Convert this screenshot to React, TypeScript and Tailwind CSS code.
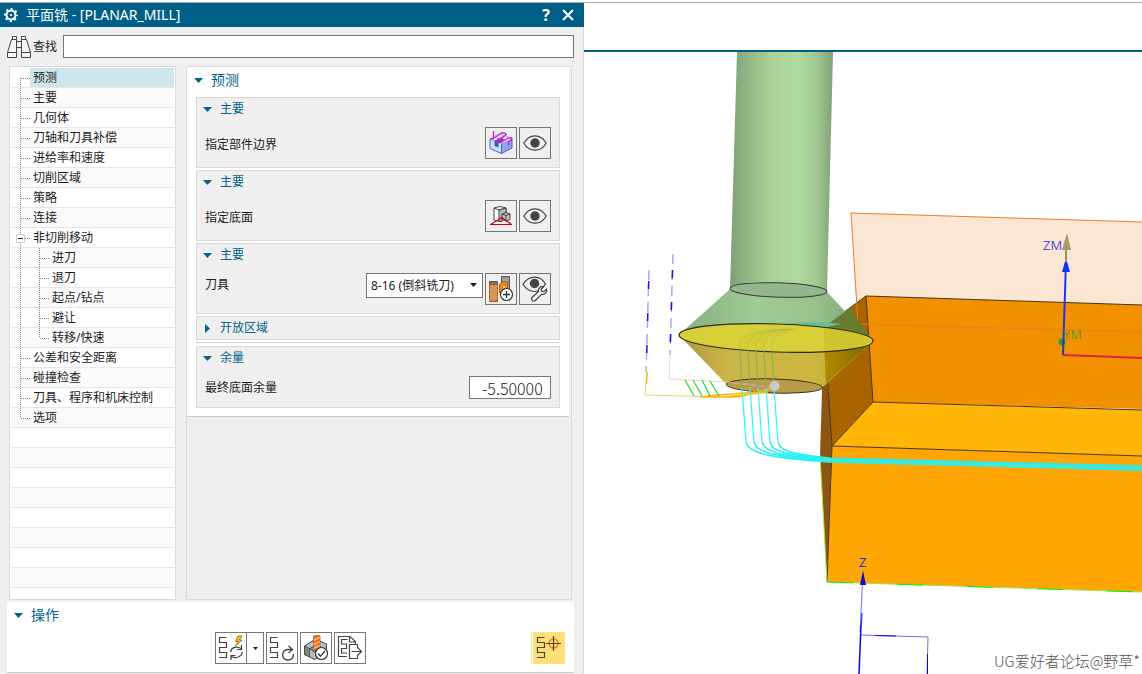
import React, { useState } from 'react';
import clsx from 'clsx';

interface TreeItem {
  label: string;
  level?: number;
  open?: boolean;
  last?: boolean;
}

const TREE: TreeItem[] = [
  { label: '预测' },
  { label: '主要' },
  { label: '几何体' },
  { label: '刀轴和刀具补偿' },
  { label: '进给率和速度' },
  { label: '切削区域' },
  { label: '策略' },
  { label: '连接' },
  { label: '非切削移动', open: true },
  { label: '进刀', level: 1 },
  { label: '退刀', level: 1 },
  { label: '起点/钻点', level: 1 },
  { label: '避让', level: 1 },
  { label: '转移/快速', level: 1, last: true },
  { label: '公差和安全距离' },
  { label: '碰撞检查' },
  { label: '刀具、程序和机床控制' },
  { label: '选项', last: true },
];

const EMPTY_ROWS = 8;

/* ---------- icons ---------- */

const GearIcon = () => (
  <svg viewBox="0 0 14 14" className="size-3.5" fill="none" stroke="#fff">
    <circle cx="7" cy="7" r="4.4" strokeWidth="2" />
    <circle cx="7" cy="7" r="6" strokeWidth="1.8" strokeDasharray="2.3 2.41" strokeDashoffset="1.15" />
    <circle cx="7" cy="7" r="1.1" fill="#fff" stroke="none" />
  </svg>
);

const BinocularsIcon = () => (
  <svg viewBox="0 0 24 22" className="h-[22px] w-6 shrink-0" fill="#f6f6f6" stroke="#444" strokeWidth="1">
    <path d="M5.5 .5h4v3h-4zM14.5 .5h4v3h-4z" />
    <path d="M4.5 3.5h5v13h-9zM14.5 3.5h5l4 13h-9z" />
    <path d="M9.5 5.5h5v6h-5z" />
    <path d="M.5 16.5h9v5h-9zM14.5 16.5h9v5h-9z" />
  </svg>
);

const CaretDown = ({ className = 'h-[5px] w-[9px]' }: { className?: string }) => (
  <svg viewBox="0 0 9 5" className={className} fill="currentColor">
    <path d="M0 0h9L4.5 5z" />
  </svg>
);

const CaretRight = () => (
  <svg viewBox="0 0 5 9" className="mx-0.5 h-[9px] w-[5px]" fill="currentColor">
    <path d="M0 0v9L5 4.5z" />
  </svg>
);

const EyeIcon = () => (
  <svg viewBox="0 0 24 16" className="h-4 w-6" fill="none" stroke="#444" strokeWidth="1.2">
    <path d="M.8 8C3.5 3.2 7.5.8 12 .8S20.5 3.2 23.2 8C20.5 12.800 16.5 15.2 12 15.2S3.5 12.8.8 8z" />
    <circle cx="12" cy="8" r="4.7" fill="#444" stroke="none" />
  </svg>
);

const EyeWrenchIcon = () => (
  <svg viewBox="0 0 26 26" className="size-[26px]" fill="none" stroke="#444" strokeWidth="1.2">
    <path d="M1 8.5C4 3.6 8 1.2 12.5 1.2S21 3.6 23.5 8C20.5 12.8 17 15.5 12.5 15.5S4 13 1 8.5z" />
    <circle cx="12.5" cy="7.500" r="4.700" fill="#444" stroke="none" />
    <path
      fill="#f3f3f3"
      d="M10 21.500l6.500-6c-.6-2.600 1.500-5.500 5-5l-2.500 2.700.6 2 2.200.5 2.700-2.600c.8 3.300-1.800 5.900-5 5.200l-6.200 6.200c-2 1.500-4.800-.9-3.300-3z"
    />
  </svg>
);

const BoundaryIcon = () => (
  <svg viewBox="0 0 24 24" className="size-6" strokeLinejoin="round">
    <path d="M1 8v9.500l11.500 5V12.500z" fill="#bfe4fc" stroke="#5560cc" />
    <path d="M12.500 12.500v10L23 17V7z" fill="#8da6ea" stroke="#5560cc" />
    <path d="M1 8l8-5 14 4-10.500 5.500z" fill="#e4f0ff" stroke="#8a90dc" strokeWidth=".6" />
    <path d="M5.500 9.500v5.500l4 1.500v-4l6-4-3-1.500z" fill="#4458b0" />
    <path d="M9.500 12.500l8-5 5.500 0-10.500 5z" fill="#dfeaff" />
    <path
      d="M4.500 0v7.500l8-5.500h3l2 1.500-7 4.500h-2l.5 3 3 .5 7-4.500h3.500v2.500l-3 1v4M1 8l3.500-.5M17.500 3.500L13 7l-2.500 3"
      fill="none"
      stroke="#d31bd0"
      strokeWidth="1.300"
    />
  </svg>
);

const FloorIcon = () => (
  <svg viewBox="0 0 24 24" className="size-6" stroke="#444" strokeWidth="1" strokeLinejoin="round">
    <path d="M5 4l6-1.500 6 1.500v4.500l-4 2v6.500l-3 .5-5-1.500z" fill="#fff" />
    <path d="M10 6l7-2v4.500l-4 2v7h-3z" fill="#b8bcbc" />
    <path d="M5 4l5 2 7-2" fill="none" />
    <path d="M13 10l4-1.500 4 1.500v5.500l-4 1.500-4-1.500z" fill="#c4c8c8" />
    <path d="M13 10l4 1.500 4-1.500M17 11.500v5" fill="none" />
    <path d="M1.500 20.500L13 13.500l9.500 7z" fill="none" stroke="#d40000" strokeWidth="1.200" />
  </svg>
);

const ToolIcon = () => (
  <svg viewBox="0 0 26 26" className="size-[26px]">
    <path d="M1.500 8.500h8v-3h-8z" fill="#767a7c" stroke="#555" />
    <path d="M1.500 8.500h8v17h-8z" fill="#f58a1f" stroke="#b35207" />
    <path d="M1.500 14l8-4M1.500 19l8-4M1.500 24l8-4" stroke="#a9a29a" strokeWidth="2" />
    <path d="M13.500.500h8v12h-8z" fill="#9a9fa2" stroke="#555" />
    <path d="M11.500 8.500l3-2.500h5v11h-8z" fill="#f58a1f" stroke="#b35207" />
    <circle cx="16" cy="11" r="1.8" fill="#ffd9a8" stroke="#b35207" strokeWidth=".6" />
    <circle cx="18.500" cy="18.500" r="6" fill="#fff" stroke="#333" strokeWidth="1.200" />
    <path d="M15 18.500h7M18.500 15v7" stroke="#333" strokeWidth="1.300" />
  </svg>
);

// zig-zag tool path shared by the operation icons
const SERPENTINE = 'M8.500 2.500H1.500v5H8.500v5H1.500v5H8.500v5H1';

const GenerateIcon = () => (
  <svg viewBox="0 0 26 26" className="size-[26px]" fill="none" stroke="#444" strokeWidth="1.200">
    <path d={SERPENTINE} />
    <path d="M20 1l-2.500 5.500h2.700L17.500 11l6.500-6h-2.700l2.700-4z" fill="#ffc20e" stroke="#8a6500" strokeWidth=".8" />
    <path d="M12.500 17c1-4.500 6-6.500 10.500-3.500M23.500 10v4.500H19M24.500 17c-1 5-6.500 7-11 4.500M13 25v-4.500h4.500" />
  </svg>
);

const ReplayIcon = () => (
  <svg viewBox="0 0 26 26" className="size-[26px]" fill="none" stroke="#444" strokeWidth="1.300">
    <path d={SERPENTINE} strokeWidth="1.200" />
    <path d="M19.500 11l4 3.500-4 3.500M23.500 14.500h-4.500c-7 .5-7 9.500-.5 10.500 4 0 6-2.500 6-6" />
  </svg>
);

const VerifyIcon = () => (
  <svg viewBox="0 0 26 26" className="size-[26px]">
    <path d="M1.500 11l11-7 11 5v9l-12 6.500-10-5z" fill="#b9bcbd" stroke="#444" />
    <path d="M1.500 11l5 2.500v8.500l-5-2.500zM6.500 13.500l8-3.500 5 3-8 4z" fill="#7e8385" stroke="#444" strokeWidth=".8" />
    <path d="M10.500 1l5.500-1 1 1v12l-3.500 2.500-3-2z" fill="#f47a20" stroke="#c4500a" strokeWidth=".8" />
    <path d="M10.500 5.500L17 2.500M10.500 9.500L17 6.500M10.500 13.500L17 10.500" stroke="#ffc48a" strokeWidth="1.200" />
    <circle cx="18.500" cy="18.500" r="6" fill="#fff" stroke="#333" strokeWidth="1.200" />
    <path d="M15 18.500l2.500 2.800 4.500-5.300" fill="none" stroke="#333" strokeWidth="1.300" />
  </svg>
);

const ListIcon = () => (
  <svg viewBox="0 0 26 26" className="size-[26px]" fill="none" stroke="#444" strokeWidth="1.200">
    <path d="M10 21.500H1.500V1.500h11.500l5.500 5v3M12.500 1.500V7h6" />
    <path d="M10.500 4.500H4.500v4.500h5v4.500h-5v4.500h5.500" />
    <path d="M20.500 13V9.500h-8v14h8V20M14.500 16.500h10M20.500 12.500l4 4-4 4" />
  </svg>
);

const PointIcon = () => (
  <svg viewBox="0 0 26 26" className="size-[26px]" fill="none" stroke="#444" strokeWidth="1.200">
    <path d={SERPENTINE} />
    <circle cx="17.500" cy="8.500" r="4.500" stroke="#f07800" strokeWidth="1.400" />
    <path d="M10 8.500h15M17.500 1v15" />
  </svg>
);

/* ---------- navigation tree ---------- */

interface BranchProps {
  first?: boolean;
  last?: boolean;
  through?: boolean;
}

const Branch: React.FC<BranchProps> = ({ first, last, through }) => (
  <svg viewBox="0 0 19 20" className="h-5 w-[19px] shrink-0" stroke="#8a8a8a" strokeDasharray="1 1" fill="none">
    <path d={first ? 'M9.500 10v10' : last ? 'M9.500 0v10' : 'M9.500 0v20'} />
    {!through && <path d="M10 10.500h9" />}
  </svg>
);

interface TreeRowProps {
  item: TreeItem;
  index: number;
  selected: boolean;
  onSelect: () => void;
}

const TreeRow: React.FC<TreeRowProps> = ({ item, index, selected, onSelect }) => (
  <li className={clsx('flex h-5 items-start border-b border-[#e6e6e6]', index % 2 ? 'bg-[#fafafa]' : 'bg-white')}>
    <span className="relative flex">
      <Branch first={index === 0} last={item.last && !item.level} through={!!item.level} />
      {item.level && <Branch last={item.last} />}
      {item.open && (
        <svg viewBox="0 0 9 9" className="absolute top-1.5 left-[5px] size-[9px]">
          <path d="M.5.5h8v8h-8z" fill="#fff" stroke="#ccc" />
          <path d="M2 4.500h5" stroke="#222" />
        </svg>
      )}
    </span>
    <button
      type="button"
      onClick={onSelect}
      className={clsx('h-[19px] flex-1 pl-[3px] text-left text-xs leading-[19px]', selected && 'bg-[#cde6eb]')}
    >
      {item.label}
    </button>
  </li>
);

/* ---------- parameter groups ---------- */

interface GroupProps {
  title: string;
  collapsed?: boolean;
  children?: React.ReactNode;
}

const Group: React.FC<GroupProps> = ({ title, collapsed, children }) => (
  <section className="border border-[#d9d9d9] bg-[#efefef]">
    <button type="button" className="flex h-[22px] items-center gap-2 pl-1.5 text-xs text-[#00648a]">
      {collapsed ? <CaretRight /> : <CaretDown />}
      {title}
    </button>
    {!collapsed && <div className="flex items-start gap-0.5 pt-[7px] pr-2 pb-2 pl-2 text-xs">{children}</div>}
  </section>
);

interface IconButtonProps {
  label: string;
  children: React.ReactNode;
}

const IconButton: React.FC<IconButtonProps> = ({ label, children }) => (
  <button
    type="button"
    aria-label={label}
    className="flex size-8 shrink-0 items-center justify-center border border-[#767676]"
  >
    {children}
  </button>
);

/* ---------- 3D view ---------- */

const PATH_OFFSETS = [0, 8, 16, 24, 32];

const Scene = () => (
  <svg viewBox="584 52 558 622" preserveAspectRatio="xMinYMin slice" className="min-h-0 w-full flex-1" fill="none">
    <defs>
      <linearGradient id="shank">
        <stop offset="0" stopColor="#809f76" />
        <stop offset=".2" stopColor="#95ba87" />
        <stop offset=".4" stopColor="#a9d098" />
        <stop offset=".66" stopColor="#b1dba0" />
        <stop offset=".85" stopColor="#a0c790" />
        <stop offset="1" stopColor="#809f76" />
      </linearGradient>
      <linearGradient id="cone">
        <stop offset="0" stopColor="#88ac80" />
        <stop offset=".4" stopColor="#9fcb95" />
        <stop offset=".7" stopColor="#98c18c" />
        <stop offset="1" stopColor="#7a9d76" />
      </linearGradient>
      <linearGradient id="lower">
        <stop offset="0" stopColor="#ad9440" />
        <stop offset=".25" stopColor="#cbb545" />
        <stop offset=".7" stopColor="#cdb540" />
        <stop offset="1" stopColor="#b39c32" />
      </linearGradient>
      <linearGradient id="shade">
        <stop offset="0" stopColor="#b08b00" />
        <stop offset="1" stopColor="#806500" />
      </linearGradient>
    </defs>

    {/* clearance plane and workpiece */}
    <path d="M851 213l291 9v110l-284-8z" fill="#fae6d3" />
    <path d="M866 296l276 9v104l-269-7z" fill="#f29100" />
    <path d="M866 296l7 106-41 44-8-119z" fill="#a86400" />
    <path d="M824 327l8 119-5 136-7-127z" fill="#8c5510" />
    <path d="M873 402l269 8v46l-310-10z" fill="#ffb606" />
    <path d="M832 446l310 10v136l-315-10z" fill="#ffa504" />
    <path d="M824 327l42-31 276 9M866 296l7 106 269 8M873 402l-41 44 310 10M832 446l-5 136M824 327l8 119" stroke="#4a3418" />
    <path d="M820 455l7 127 315 10" stroke="#9be84a" />
    <path d="M827 582l315 10" stroke="#00f000" strokeDasharray="26 44" />
    <path d="M1142 222l-291-9 7 111 284 8" stroke="#ea7c2c" />

    {/* cutter */}
    <path d="M737 52h96l-6 240-97-3z" fill="url(#shank)" />
    <path d="M730 289l97 3 46 49-194-6z" fill="url(#cone)" />
    <path d="M824 327l26-19 23 33-49-2z" fill="#687c30" />
    <path d="M679 335l194 6-50 46c-20 7-70 9-96-2z" fill="url(#lower)" />
    <path d="M824 343l49-2-47 42z" fill="url(#shade)" />
    <path d="M770 326c28-5 50-5 72-2l-20 4z" fill="#67bd8e" />
    <ellipse cx="776" cy="338" rx="97" ry="14" transform="rotate(1.800 776 338)" fill="#d7cf37" stroke="#2c2c18" strokeWidth="1.200" />
    <path d="M824 328l34 4 14 9-12 6-36 4z" fill="#ada100" opacity=".2" />
    <ellipse cx="778.500" cy="290" rx="48.500" ry="7.200" transform="rotate(1.800 778.500 290)" fill="#94b68c" stroke="#333c30" />
    <ellipse cx="774.500" cy="386" rx="48" ry="7" transform="rotate(1.800 774.500 386)" fill="#b89c4c" stroke="#3a3010" />

    {/* approach moves */}
    <path d="M649 270l-3 102M673 254l-3 101" stroke="#a8a8f4" strokeWidth="1.500" strokeDasharray="10 6" />
    <path d="M648.700 281l-2.500 91M672.500 270l-2.500 85" stroke="#1414e0" strokeWidth="1.500" strokeDasharray="8 24" />
    <path d="M670 355l-1 24 58 3 43 5" stroke="#f6cfd8" />
    <path d="M727 382l44 5-35-4z" fill="#c69a80" stroke="#cf9a88" />
    <path d="M647 372l-2 23 75 2" stroke="#ffc66c" />
    <path d="M647 372l-.5 12M700 397h38l36-9M706 396l50-4M724 397l44-5" stroke="#ffb900" strokeWidth="1.400" />
    <path d="M685 380l9 16M693 380l9 16M702 380l8 16M710 381l9 15" stroke="#1ee01e" strokeWidth="1.200" />

    {/* tool path */}
    {PATH_OFFSETS.map((dx, i) => (
      <g key={dx} transform={`translate(${dx} 0)`}>
        <path d={`M740 350c-2-12 4-18 ${44 - i * 5}-21`} stroke="#a8b83a" opacity=".6" />
        <path d="M740 350l2 38" stroke="#74b45c" />
        <path d="M742 388l4 54" stroke="#3cf6f6" strokeWidth="1.300" />
      </g>
    ))}
    {PATH_OFFSETS.map((dx, i) => (
      <path
        key={dx}
        d={`M${746 + dx} 442c2 10 ${20 - i} ${16 - i} ${84 - dx} ${20 - i}l312 8`}
        stroke="#20f0f0"
        strokeWidth="1.300"
      />
    ))}
    <path d="M820 460l322 9" stroke="#45e8da" strokeWidth="4" opacity=".8" />
    <circle cx="774.500" cy="386" r="5" fill="#c9c9d0" />

    {/* machine coordinate system */}
    <path d="M1063 355l79 3" stroke="#d8283c" strokeWidth="2" />
    <circle cx="1062" cy="342" r="3.500" fill="#2e9850" />
    <path d="M1063 355l3-94" stroke="#2038d8" strokeWidth="2" />
    <path d="M1066 258l4 14h-8z" fill="#0b36f0" />
    <path d="M1066 262v-14" stroke="#a0906a" strokeWidth="2" />
    <path d="M1067 233l4 17h-9z" fill="#a8986a" />
    <g fontFamily="'Open Sans', sans-serif">
      <text x="1043" y="250" fontSize="13" fill="#4848e4">ZM</text>
      <text x="1063" y="339" fontSize="13" fill="#5a9a1e">YM</text>
      <text x="859" y="567" fontSize="13" fill="#2020f0">Z</text>
    </g>

    {/* work coordinate system */}
    <path d="M863 572l-3 60M860 635l68 2-1 37" stroke="#7070f0" />
    <path d="M861 625l-2 49" stroke="#0a0ae0" strokeWidth="1.500" />
    <path d="M862 613l-.5 12M875 635.500l21 .5M927.500 654v20" stroke="#0a0ae0" />
    <path d="M863 571l3 14h-6z" fill="#0a0ae0" />
  </svg>
);

const App: React.FC = () => {
  const [selected, setSelected] = useState(0);
  const [query, setQuery] = useState('');
  const [stock, setStock] = useState('-5.50000');

  return (
    <div className="flex min-h-screen flex-col bg-white font-['Noto_Sans','Noto_Sans_CJK_SC',sans-serif] text-[#1c1c1c]">
      <div className="h-[3px] shrink-0 border-b border-[#a8a8a8]" />
      <div className="flex flex-1">
        <div className="flex min-w-0 shrink-0 basis-[584px] flex-col bg-[#efefef]">
          <header className="flex h-6 items-center bg-[#005f87] pr-2.5 pl-1 text-white">
            <GearIcon />
            <h1 className="ml-2 flex-1 text-sm leading-6">平面铣 - [PLANAR_MILL]</h1>
            <button type="button" aria-label="帮助" className="mr-3 text-base leading-6 font-bold">
              ?
            </button>
            <button type="button" aria-label="关闭">
              <svg viewBox="0 0 12 12" className="size-3" stroke="#fff" strokeWidth="2">
                <path d="M1 1l10 10M11 1L1 11" />
              </svg>
            </button>
          </header>

          <div className="flex flex-1 flex-col border-r border-[#d9d9d9] pr-[9px]">
            <div className="flex h-[39px] items-center pl-[7px]">
              <BinocularsIcon />
              <label htmlFor="search" className="mr-1.5 ml-0.5 text-xs">
                查找
              </label>
              <input
                id="search"
                type="text"
                value={query}
                onChange={(e) => setQuery(e.target.value)}
                className="h-[23px] min-w-0 flex-1 border border-[#767676] bg-white px-1 text-xs outline-none"
              />
            </div>

            <div className="flex flex-1 gap-2.5 pr-0.5 pl-[9px]">
              <ul className="w-[167px] shrink-0 border border-[#d9d9d9] bg-white p-px">
                {TREE.map((item, i) => (
                  <TreeRow
                    key={item.label}
                    item={item}
                    index={i}
                    selected={i === selected}
                    onSelect={() => setSelected(i)}
                  />
                ))}
                {Array.from({ length: EMPTY_ROWS }, (_, i) => (
                  <li key={i} className="h-5 border-b border-[#e6e6e6] odd:bg-white even:bg-[#fafafa]" />
                ))}
              </ul>

              <div className="flex-1 border border-[#d9d9d9] pr-0.5">
                <div className="border-b border-[#c8c8c8] bg-white pr-[9px] pb-2 pl-[9px]">
                  <button type="button" className="-ml-0.5 flex h-[30px] items-center gap-2 pb-1 text-sm text-[#00648a]">
                    <CaretDown />
                    预测
                  </button>

                  <div className="flex flex-col gap-0.5">
                    <Group title="主要">
                      <span className="flex-1 pt-1 leading-7">指定部件边界</span>
                      <IconButton label="指定部件边界">
                        <BoundaryIcon />
                      </IconButton>
                      <IconButton label="显示部件边界">
                        <EyeIcon />
                      </IconButton>
                    </Group>
                    <Group title="主要">
                      <span className="flex-1 pt-1 leading-7">指定底面</span>
                      <IconButton label="指定底面">
                        <FloorIcon />
                      </IconButton>
                      <IconButton label="显示底面">
                        <EyeIcon />
                      </IconButton>
                    </Group>
                    <Group title="主要">
                      <label htmlFor="tool" className="flex-1 leading-6">
                        刀具
                      </label>
                      <span className="relative">
                        <select
                          id="tool"
                          className="h-[25px] w-[117px] appearance-none border border-[#767676] bg-white pl-1 text-xs outline-none"
                        >
                          <option>8-16 (倒斜铣刀)</option>
                        </select>
                        <CaretDown className="pointer-events-none absolute top-2.5 right-1.5 h-1 w-[7px]" />
                      </span>
                      <IconButton label="新建刀具">
                        <ToolIcon />
                      </IconButton>
                      <IconButton label="编辑刀具">
                        <EyeWrenchIcon />
                      </IconButton>
                    </Group>
                    <Group title="开放区域" collapsed />
                    <div className="mb-px border-t border-[#d0d0d0]" />
                    <Group title="余量">
                      <label htmlFor="stock" className="flex-1 leading-[23px]">
                        最终底面余量
                      </label>
                      <input
                        id="stock"
                        type="text"
                        value={stock}
                        onChange={(e) => setStock(e.target.value)}
                        className="h-[23px] w-[82px] border border-[#767676] bg-white pr-0.5 pl-3 font-['Noto_Sans_CJK_SC',sans-serif] text-base font-light outline-none"
                      />
                    </Group>
                  </div>
                </div>
              </div>
            </div>

            <section className="mt-0.5 ml-[7px] border-b border-[#c8c8c8] bg-white pb-2">
              <button type="button" className="flex h-[30px] items-center gap-2 pb-1 pl-[7px] text-sm text-[#00648a]">
                <CaretDown />
                操作
              </button>
              <div className="grid grid-cols-[1fr_auto_1fr] px-[9px]">
                <div className="col-start-2 flex gap-0.5">
                  <div className="flex">
                    <IconButton label="生成">
                      <GenerateIcon />
                    </IconButton>
                    <button
                      type="button"
                      aria-label="生成选项"
                      className="flex h-8 w-[17px] items-center justify-center border border-l-0 border-[#767676]"
                    >
                      <CaretDown className="h-[3px] w-[5px]" />
                    </button>
                  </div>
                  <IconButton label="重播">
                    <ReplayIcon />
                  </IconButton>
                  <IconButton label="确认">
                    <VerifyIcon />
                  </IconButton>
                  <IconButton label="列表">
                    <ListIcon />
                  </IconButton>
                </div>
                <div className="flex justify-end">
                  <div className="border-l border-[#ffe07a] pl-px">
                    <button
                      type="button"
                      aria-label="显示刀轨点"
                      className="flex size-8 items-center justify-center bg-[#ffdf78]"
                    >
                      <PointIcon />
                    </button>
                  </div>
                </div>
              </div>
            </section>
            <div className="h-px" />
          </div>
        </div>

        <main className="relative flex min-w-0 flex-1 flex-col">
          <div className="h-[49px] shrink-0 border-b-2 border-[#005f87]" />
          <Scene />
          <p className="absolute right-0.5 bottom-0.5 font-['Noto_Sans_CJK_SC',sans-serif] text-[15px] font-light text-[#555]">
            UG爱好者论坛@野草*
          </p>
        </main>
      </div>
    </div>
  );
};

export default App;
